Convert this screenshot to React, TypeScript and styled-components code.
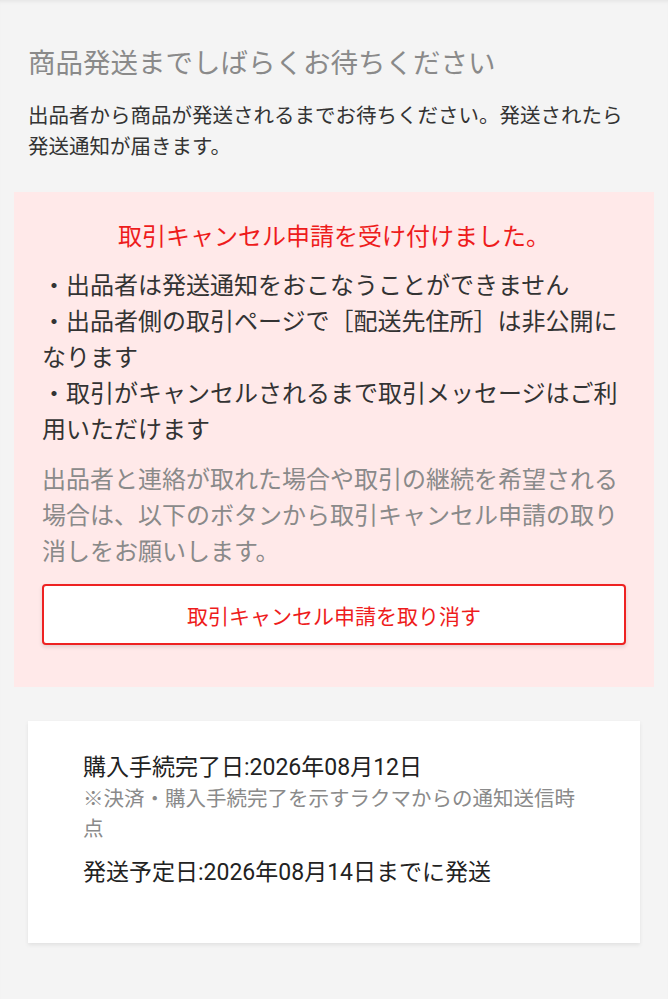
import styled, { createGlobalStyle } from 'styled-components';

const GlobalStyle = createGlobalStyle`
  html, body {
    margin: 0;
    padding: 0;
    background-color: #f4f4f4;
  }
  body {
    font-family: Roboto, "Noto Sans CJK JP", "Noto Sans", sans-serif;
    -webkit-font-smoothing: antialiased;
  }
`;

const Page = styled.div`
  min-height: 999px;
  padding: 0 14px 40px;
  box-sizing: border-box;
  background-color: #f4f4f4;
  box-shadow: inset 0 4px 4px -3px rgba(0, 0, 0, 0.08);
`;

const Intro = styled.section`
  padding: 44px 14px 0;
`;

const Heading = styled.h1`
  margin: 0;
  font-size: 27.5px;
  line-height: 40px;
  font-weight: 400;
  color: #8a8a8a;
`;

const Lead = styled.p`
  margin: 16.5px 0 0;
  font-size: 20.5px;
  line-height: 31px;
  color: #333;
`;

const Notice = styled.section`
  margin-top: 29.5px;
  padding: 27px 28px 42px;
  background-color: #ffe9e9;
  display: flex;
  flex-direction: column;
`;

const NoticeTitle = styled.p`
  margin: 0;
  text-align: center;
  font-size: 24px;
  line-height: 36px;
  color: #ee1c1c;
`;

const Bullets = styled.ul`
  list-style: none;
  margin: 13px 0 0;
  padding: 0;
`;

const Bullet = styled.li`
  font-size: 24px;
  line-height: 36px;
  color: #333;
`;

const Hint = styled.p`
  margin: 14px 0 0;
  font-size: 24px;
  line-height: 36px;
  color: #8a8a8a;
`;

const CancelButton = styled.button`
  margin-top: 14px;
  height: 61px;
  width: 100%;
  box-sizing: border-box;
  border: 2px solid #ee2222;
  border-radius: 4px;
  background-color: #fff;
  box-shadow: 0 2px 4px rgba(0, 0, 0, 0.12);
  color: #ee1c1c;
  font-family: inherit;
  font-size: 21px;
  cursor: pointer;
`;

const Card = styled.section`
  margin: 34px 14px 0;
  padding: 31px 50px 54px 55px;
  background-color: #fff;
  box-shadow: 0 2px 4px rgba(0, 0, 0, 0.08);
`;

const DateLine = styled.p<{ $gap?: number }>`
  margin: ${(p) => p.$gap ?? 0}px 0 0;
  font-size: 23px;
  line-height: 32px;
  color: #222;
`;

const Note = styled.p`
  margin: 0;
  font-size: 20.5px;
  line-height: 30px;
  color: #8a8a8a;
`;

const bullets = [
  '・出品者は発送通知をおこなうことができません',
  '・出品者側の取引ページで［配送先住所］は非公開になります',
  '・取引がキャンセルされるまで取引メッセージはご利用いただけます',
];

export default function App() {
  return (
    <>
      <GlobalStyle />
      <Page>
        <Intro>
          <Heading>商品発送までしばらくお待ちください</Heading>
          <Lead>
            出品者から商品が発送されるまでお待ちください。発送されたら発送通知が届きます。
          </Lead>
        </Intro>

        <Notice>
          <NoticeTitle>取引キャンセル申請を受け付けました。</NoticeTitle>
          <Bullets>
            {bullets.map((b) => (
              <Bullet key={b}>{b}</Bullet>
            ))}
          </Bullets>
          <Hint>
            出品者と連絡が取れた場合や取引の継続を希望される場合は、以下のボタンから取引キャンセル申請の取り消しをお願いします。
          </Hint>
          <CancelButton type="button">取引キャンセル申請を取り消す</CancelButton>
        </Notice>

        <Card>
          <DateLine>購入手続完了日:2026年08月12日</DateLine>
          <Note>※決済・購入手続完了を示すラクマからの通知送信時点</Note>
          <DateLine $gap={13}>発送予定日:2026年08月14日までに発送</DateLine>
        </Card>
      </Page>
    </>
  );
}
